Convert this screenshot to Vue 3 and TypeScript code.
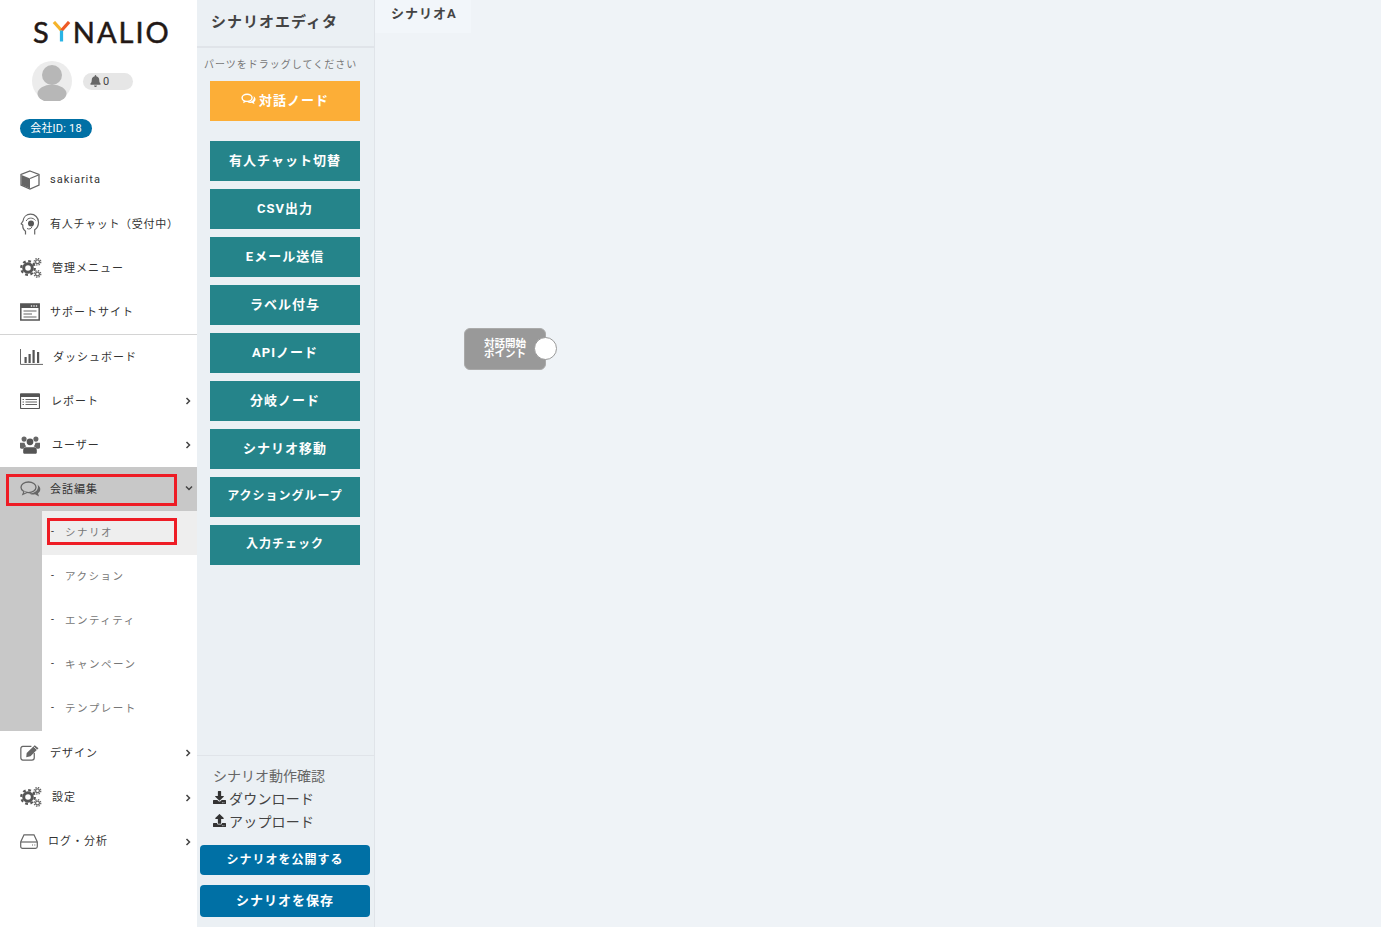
<script setup lang="ts">
interface NavItem {
  icon: string
  label: string
  shift: number
  arrow?: string
  divider?: boolean
  active?: boolean
  narrow?: boolean
}
const topNav: NavItem[] = [
  { icon: 'cube', label: 'sakiarita', shift: 0 },
  { icon: 'head', label: '有人チャット（受付中）', shift: 0, narrow: true },
  { icon: 'gears', label: '管理メニュー', shift: 2 },
  { icon: 'browser', label: 'サポートサイト', shift: 0, divider: true },
  { icon: 'chart', label: 'ダッシュボード', shift: 3 },
  { icon: 'list', label: 'レポート', shift: 1, arrow: 'right' },
  { icon: 'users', label: 'ユーザー', shift: 2, arrow: 'right' },
  { icon: 'comments', label: '会話編集', shift: 0, arrow: 'down', active: true },
]
const subNav = ['シナリオ', 'アクション', 'エンティティ', 'キャンペーン', 'テンプレート']
const bottomNav: NavItem[] = [
  { icon: 'edit', label: 'デザイン', shift: 0, arrow: 'right' },
  { icon: 'gears', label: '設定', shift: 2, arrow: 'right' },
  { icon: 'hdd', label: 'ログ・分析', shift: -2, arrow: 'right' },
]
const parts = ['有人チャット切替', 'CSV出力', 'Eメール送信', 'ラベル付与', 'APIノード', '分岐ノード', 'シナリオ移動', 'アクショングループ', '入力チェック']
const tightParts = ['アクショングループ', '入力チェック']
</script>

<template>
  <div class="page">
    <svg class="defs" width="0" height="0" aria-hidden="true">
      <symbol id="cube" viewBox="0 0 20 20">
        <path d="M10 1 19 4.500V15L10 19 1 15V4.500Z" fill="none" stroke="#666" stroke-width="1.300" />
        <path d="M1.500 5 10 8.500V18.500L1.500 15Z" fill="#666" />
        <path d="M10 8.500 18.500 5" stroke="#666" stroke-width="1.300" />
      </symbol>
      <symbol id="head" viewBox="0 0 20 22">
        <path d="M5.500 21.500V18.300C3.300 16.500 2.500 14.300 2.800 12L1.200 10.800 3 8C3.500 4 6.500 1.200 10.500 1.200c4.500 0 8 3.500 8 8 0 3.500-1.500 6-3.800 7.500v4.800" fill="none" stroke="#666" stroke-width="1.200" />
        <circle cx="11" cy="10.500" r="3" fill="#555" />
        <path d="M6.200 8C7.500 4.500 13 4 15.500 7.500M7 15.500c2 1 4.500.5 5-2" fill="none" stroke="#666" stroke-width="1" />
      </symbol>
      <symbol id="gears" viewBox="0 0 22 20">
        <circle cx="8" cy="10" r="4.300" fill="none" stroke="#555" stroke-width="3" />
        <circle cx="8" cy="10" r="6.800" fill="none" stroke="#555" stroke-width="2.200" stroke-dasharray="2.800 2.540" />
        <circle cx="17.500" cy="3.800" r="1.900" fill="none" stroke="#666" stroke-width="1.200" />
        <circle cx="17.500" cy="3.800" r="3.300" fill="none" stroke="#666" stroke-width="1.300" stroke-dasharray="1.400 1.190" />
        <circle cx="17.500" cy="16" r="1.900" fill="none" stroke="#666" stroke-width="1.200" />
        <circle cx="17.500" cy="16" r="3.300" fill="none" stroke="#666" stroke-width="1.300" stroke-dasharray="1.400 1.190" />
      </symbol>
      <symbol id="browser" viewBox="0 0 20 18">
        <path d="M.8 1H19.200V17H.8Z" fill="none" stroke="#555" stroke-width="1.500" />
        <path d="M1 1H19V5H1Z" fill="#555" />
        <circle cx="11.500" cy="3" r=".8" fill="#fff" /><circle cx="14" cy="3" r=".8" fill="#fff" /><circle cx="16.500" cy="3" r=".8" fill="#fff" />
        <path d="M3.500 8H16.500M3.500 11H12M3.500 14H16.500" stroke="#666" stroke-width="1.100" />
      </symbol>
      <symbol id="chart" viewBox="0 0 23 16">
        <path d="M.5 0V15.400H23" fill="none" stroke="#666" stroke-width="1" />
        <path d="M4.500 8h2.200v6H4.500ZM8.500 5h2.200v9H8.500ZM12.500 1h2.200v13h-2.200ZM17 3h2.200v11H17Z" fill="#555" />
      </symbol>
      <symbol id="list" viewBox="0 0 20 16">
        <path d="M1 .8H19A.8.8 0 0 1 19.500 1.500V15A.8.8 0 0 1 19 15.500H1A.8.8 0 0 1 .5 15V1.500A.8.8 0 0 1 1 .8Z" fill="none" stroke="#555" stroke-width="1.200" />
        <path d="M.5 1H19.500V4H.5Z" fill="#555" />
        <path d="M2.500 6.500H4M2.500 9H4M2.500 11.500H4M5.500 6.500H17M5.500 9H17M5.500 11.500H17" stroke="#666" stroke-width="1.100" />
      </symbol>
      <symbol id="users" viewBox="0 0 22 20">
        <circle cx="4.500" cy="3.500" r="2.800" fill="#666" />
        <circle cx="17.500" cy="3.500" r="2.800" fill="#666" />
        <circle cx="11" cy="6.500" r="3.700" fill="#555" />
        <path d="M0 7.500h5C5.500 9.500 6 10.500 7 11.500 5.500 12 4.500 13 4 14H1.500C.5 14 0 13.500 0 12.500ZM22 7.500h-5c-.5 2-1 3-2 4 1.500.5 2.500 1.500 3 2.500h2.500c1 0 1.500-.5 1.500-1.500Z" fill="#666" />
        <path d="M6 12.500h10c1.500 0 2.500 1.500 2.500 3.500v2c0 1-.5 1.700-1.500 1.700H5c-1 0-1.500-.7-1.500-1.700v-2c0-2 1-3.500 2.500-3.500Z" fill="#555" />
      </symbol>
      <symbol id="comments" viewBox="0 0 21 16">
        <ellipse cx="8.500" cy="6.300" rx="7.500" ry="5.300" fill="none" stroke="#666" stroke-width="1.300" />
        <path d="M4 10.300 2.800 13.500 7 11.500" fill="#c8c8c8" stroke="#666" stroke-width="1.100" />
        <path d="M17 3.500C19.500 5 21 7 20 10c-.5 1-1.200 1.800-2 2.300l1 3.200-4-2.300c-2 .5-4.500.3-6-1 4 .3 8.500-1.500 9-6 .1-1 0-2-1-2.700Z" fill="#666" />
      </symbol>
      <symbol id="edit" viewBox="0 0 21 18">
        <path d="M15 9.500V14.500A2.500 2.500 0 0 1 12.500 17H3A2.500 2.500 0 0 1 .8 14.500V5A2.500 2.500 0 0 1 3 2.500H12" fill="none" stroke="#666" stroke-width="1.300" />
        <path d="M7 9.500 15.500 1.200 19.500 4.500 11 13 6.500 14Z" fill="#666" />
        <path d="M14.500 3 18 6.200" stroke="#fff" stroke-width=".8" />
      </symbol>
      <symbol id="hdd" viewBox="0 0 18 15">
        <path d="M4 .8H14L17.300 8V12.500A1.800 1.800 0 0 1 15.500 14.300H2.500A1.800 1.800 0 0 1 .7 12.500V8Z" fill="none" stroke="#666" stroke-width="1.200" />
        <path d="M1 8H17" stroke="#666" stroke-width="1.200" />
        <path d="M12 11h1M14.300 11h1" stroke="#666" stroke-width="1.200" />
      </symbol>
      <symbol id="bell" viewBox="0 0 448 512">
        <path d="M224 512c35.32 0 63.97-28.65 63.97-64H160.03c0 35.35 28.65 64 63.97 64zm215.39-149.71c-19.32-20.76-55.47-51.99-55.47-154.29 0-77.7-54.48-139.9-127.94-155.16V32c0-17.67-14.32-32-31.98-32s-31.98 14.33-31.98 32v20.84C118.56 68.1 64.08 130.3 64.08 208c0 102.3-36.15 133.53-55.47 154.29-6 6.45-8.66 14.16-8.61 21.71.11 16.4 12.98 32 32.1 32h383.8c19.12 0 32-15.6 32.1-32 .05-7.55-2.61-15.27-8.61-21.71z" />
      </symbol>
      <symbol id="download" viewBox="0 0 512 512">
        <path d="M216 0h80c13.3 0 24 10.7 24 24v168h87.7c17.8 0 26.7 21.5 14.1 34.1L269.7 378.3c-7.5 7.5-19.8 7.5-27.3 0L90.1 226.1c-12.6-12.6-3.7-34.1 14.1-34.1H192V24c0-13.3 10.7-24 24-24zm296 376v112c0 13.3-10.7 24-24 24H24c-13.3 0-24-10.7-24-24V376c0-13.3 10.7-24 24-24h146.7l49 49c20.1 20.1 52.5 20.1 72.6 0l49-49H488c13.3 0 24 10.7 24 24zm-124 88c0-11-9-20-20-20s-20 9-20 20 9 20 20 20 20-9 20-20zm64 0c0-11-9-20-20-20s-20 9-20 20 9 20 20 20 20-9 20-20z" />
      </symbol>
      <symbol id="upload" viewBox="0 0 512 512">
        <path d="M296 384h-80c-13.3 0-24-10.7-24-24V192h-87.7c-17.8 0-26.7-21.5-14.1-34.1L242.3 5.7c7.5-7.5 19.8-7.5 27.3 0l152.2 152.2c12.6 12.6 3.7 34.1-14.1 34.1H320v168c0 13.3-10.7 24-24 24zm216-8v112c0 13.3-10.7 24-24 24H24c-13.3 0-24-10.7-24-24V376c0-13.3 10.7-24 24-24h136v8c0 30.9 25.1 56 56 56h80c30.9 0 56-25.1 56-56v-8h136c13.3 0 24 10.7 24 24zm-124 88c0-11-9-20-20-20s-20 9-20 20 9 20 20 20 20-9 20-20zm64 0c0-11-9-20-20-20s-20 9-20 20 9 20 20 20 20-9 20-20z" />
      </symbol>
    </svg>

    <aside class="sidebar">
      <div class="logo">
        <span>S</span>
        <svg class="logo-y" viewBox="0 0 20 22" aria-hidden="true">
          <path d="M2 1 10 10" stroke="#f5b32b" stroke-width="3.400" fill="none" />
          <path d="M18 1 10 10" stroke="#ee5a26" stroke-width="3.400" fill="none" />
          <path d="M10 10V21.500" stroke="#28b4e6" stroke-width="3.400" fill="none" />
        </svg>
        <span>NALIO</span>
      </div>
      <div class="profile">
        <svg class="avatar" viewBox="0 0 40 40" aria-hidden="true">
          <circle cx="20" cy="20" r="20" fill="#ececec" />
          <circle cx="20" cy="14" r="10" fill="#b7b7b7" />
          <ellipse cx="20" cy="32.500" rx="14.500" ry="9" fill="#b7b7b7" />
        </svg>
        <span class="bell-pill">
          <svg class="bell" aria-hidden="true"><use href="#bell" /></svg><span class="bell-count">0</span>
        </span>
      </div>
      <div class="company"><span>会社ID: 18</span></div>

      <nav class="nav">
        <div v-for="item in topNav" :key="item.label" class="row" :class="{ divider: item.divider, active: item.active }">
          <svg class="nav-icon" :class="'i-' + item.icon" aria-hidden="true"><use :href="'#' + item.icon" /></svg>
          <span class="label" :class="{ narrow: item.narrow }" :style="{ marginLeft: item.shift + 'px' }">{{ item.label }}</span>
          <svg v-if="item.arrow" class="arrow" :class="{ down: item.arrow === 'down' }" viewBox="0 0 8 8" aria-hidden="true">
            <path d="M2.500 1 5.500 4 2.500 7" fill="none" stroke="#444" stroke-width="1.500" />
          </svg>
        </div>
        <div class="sub">
          <div v-for="(s, i) in subNav" :key="s" class="sub-row" :class="{ current: i === 0 }">
            <span class="dash">-</span><span class="sub-label">{{ s }}</span>
          </div>
        </div>
        <div v-for="(item, i) in bottomNav" :key="item.label" class="row lifted" :class="{ tall: i === 0 }">
          <svg class="nav-icon" :class="'i-' + item.icon" aria-hidden="true"><use :href="'#' + item.icon" /></svg>
          <span class="label" :style="{ marginLeft: item.shift + 'px' }">{{ item.label }}</span>
          <svg class="arrow" viewBox="0 0 8 8" aria-hidden="true">
            <path d="M2.500 1 5.500 4 2.500 7" fill="none" stroke="#444" stroke-width="1.500" />
          </svg>
        </div>
      </nav>
      <div class="mark mark-a"></div>
      <div class="mark mark-b"></div>
    </aside>

    <section class="editor">
      <h1 class="editor-title">シナリオエディタ</h1>
      <p class="hint">パーツをドラッグしてください</p>
      <div class="parts">
        <div class="part orange">
          <svg class="part-icon" viewBox="0 0 21 16" aria-hidden="true">
            <ellipse cx="8.500" cy="6.300" rx="7" ry="5" fill="none" stroke="#fff" stroke-width="2" />
            <path d="M4 10 3 14 8 11.500" fill="#fff" />
            <path d="M17 3.500C19.500 5 21 7 20 10c-.5 1-1.200 1.800-2 2.300l1 3.200-4-2.300c-2 .5-4.500.3-6-1 4 .3 8.500-1.500 9-6 .1-1 0-2-1-2.700Z" fill="#fff" />
          </svg>対話ノード
        </div>
        <div class="teal-list">
          <div v-for="p in parts" :key="p" class="part teal" :class="{ tight: tightParts.includes(p) }">{{ p }}</div>
        </div>
      </div>
      <div class="tools">
        <div class="tool muted">シナリオ動作確認</div>
        <div class="tool"><svg class="tool-icon" aria-hidden="true"><use href="#download" /></svg>ダウンロード</div>
        <div class="tool"><svg class="tool-icon" aria-hidden="true"><use href="#upload" /></svg>アップロード</div>
        <button class="action publish">シナリオを公開する</button>
        <button class="action save">シナリオを保存</button>
      </div>
    </section>

    <main class="canvas">
      <div class="tab">シナリオA</div>
      <div class="node">
        <span class="node-text">対話開始<br />ポイント</span>
        <span class="port"></span>
      </div>
    </main>
  </div>
</template>

<style>
html, body { margin: 0; padding: 0; background: #eff3f7; }
</style>

<style scoped>
.page {
  display: flex;
  width: 1381px;
  height: 927px;
  overflow: hidden;
  font-family: "Roboto", "Noto Sans CJK JP", "Noto Sans", sans-serif;
  color: #333;
  background: #eff3f7;
}
.defs { position: absolute; }

.sidebar { position: relative; width: 197px; flex: none; background: #fff; }
.logo {
  height: 61px;
  box-sizing: border-box;
  padding: 13px 0 0 33px;
  display: flex;
  align-items: flex-start;
  font-family: "Lato", sans-serif;
  font-size: 29px;
  line-height: 38px;
  letter-spacing: 2px;
  color: #231815;
  -webkit-text-stroke: 0.5px #231815;
}
.logo-y { width: 19px; height: 21px; margin: 8px 2px 0 1px; flex: none; }
.profile { display: flex; align-items: center; height: 40px; padding-left: 32px; }
.avatar { width: 40px; height: 40px; }
.bell-pill {
  display: flex;
  align-items: center;
  width: 50px;
  height: 17px;
  margin-left: 11px;
  box-sizing: border-box;
  padding-left: 7px;
  border-radius: 9px;
  background: #e6e6e6;
}
.bell-count { font-size: 11px; line-height: 17px; color: #444; }
.bell { width: 11px; height: 12px; margin-right: 2px; fill: #666; }
.company { height: 19px; margin-top: 18px; padding-left: 20px; display: flex; }
.company span {
  display: block;
  width: 72px;
  height: 19px;
  border-radius: 10px;
  background: #0070a5;
  color: #fff;
  font-size: 11px;
  line-height: 20px;
  letter-spacing: 0.2px;
  text-align: center;
}
.nav { margin-top: 20px; }
.row {
  position: relative;
  display: flex;
  align-items: center;
  height: 44px;
  padding-left: 20px;
  box-sizing: border-box;
}
.row.lifted { padding-bottom: 2px; }
.row.tall { height: 45px; }
.row.divider { height: 45px; border-bottom: 1px solid #d4d4d4; }
.row.active { background: #c8c8c8; }
.nav-icon { width: 20px; height: 20px; margin-right: 10px; flex: none; }
.i-head { height: 22px; }
.i-chart { width: 23px; height: 16px; margin-right: 7px; }
.i-gears { width: 22px; height: 20px; margin-right: 8px; }
.i-hdd { width: 18px; height: 15px; margin-right: 12px; }
.i-list { width: 20px; height: 16px; }
.i-browser { width: 20px; height: 18px; }
.i-edit { width: 20px; height: 17px; }
.i-comments { width: 21px; height: 16px; margin-right: 9px; }
.label { padding-bottom: 2px; font-size: 11px; letter-spacing: 1px; color: #333; white-space: nowrap; }
.label.narrow { letter-spacing: 0.7px; }
.arrow { position: absolute; left: 184px; top: 18px; width: 8px; height: 8px; }
.arrow.down { transform: rotate(90deg); left: 185px; top: 17px; }
.sub { background: #c8c8c8; padding-left: 42px; }
.sub-row {
  display: flex;
  align-items: center;
  height: 44px;
  background: #fff;
  padding: 0 0 4px 9px;
  box-sizing: border-box;
  font-size: 10.500px;
}
.sub-row.current { background: #eeeeee; }
.dash { width: 14px; color: #333; }
.sub-label { letter-spacing: 1.5px; color: #777; white-space: nowrap; }
.mark { position: absolute; box-sizing: border-box; border: 3px solid #ee1c25; }
.mark-a { left: 6px; top: 474px; width: 171px; height: 32px; }
.mark-b { left: 47px; top: 518px; width: 130px; height: 27px; }

.editor {
  width: 178px;
  flex: none;
  display: flex;
  flex-direction: column;
  background: #ebf0f4;
  border-right: 1px solid #e0e4e9;
  box-sizing: border-box;
}
.editor-title {
  margin: 0;
  height: 48px;
  box-sizing: border-box;
  padding: 10px 0 0 14px;
  border-bottom: 2px solid #e0e4e9;
  font-size: 15px;
  font-weight: 700;
  line-height: 24px;
  letter-spacing: 1px;
  color: #444;
}
.hint {
  margin: 9px 0 0 7px;
  font-size: 10px;
  line-height: 15px;
  letter-spacing: 1px;
  color: #777;
  white-space: nowrap;
}
.parts { margin-top: 9px; padding-left: 13px; }
.part {
  width: 150px;
  height: 40px;
  box-sizing: border-box;
  padding-bottom: 4px;
  display: flex;
  align-items: center;
  justify-content: center;
  color: #fff;
  font-size: 13px;
  font-weight: 700;
  letter-spacing: 1px;
}
.orange { background: #fcae37; }
.part-icon { width: 15px; height: 12px; margin-right: 3px; }
.teal-list { display: flex; flex-direction: column; gap: 8px; margin-top: 20px; }
.teal { background: #25848a; }
.tight { font-size: 12px; padding-bottom: 6px; }
.tools {
  margin-top: auto;
  height: 172px;
  box-sizing: border-box;
  border-top: 1px solid #e0e4e9;
  padding: 7px 0 0 3px;
}
.tool {
  height: 23px;
  padding-left: 13px;
  display: flex;
  align-items: center;
  font-size: 14px;
  letter-spacing: 0.2px;
  color: #444;
}
.tool.muted { letter-spacing: 0; color: #666; }
.tool-icon { width: 13px; height: 13px; margin-right: 3px; fill: #333; }
.action {
  display: block;
  width: 170px;
  border: 0;
  border-radius: 4px;
  background: #0070a5;
  color: #fff;
  font-family: inherit;
  font-weight: 700;
  letter-spacing: 1px;
  padding: 0 0 4px;
}
.publish { height: 30px; margin-top: 13px; font-size: 12px; }
.save { height: 32px; margin-top: 10px; font-size: 13px; }

.canvas { position: relative; flex: 1; }
.tab {
  width: 96px;
  height: 33px;
  box-sizing: border-box;
  padding: 3px 0 0 16px;
  background: #f2f6fa;
  font-size: 13px;
  font-weight: 700;
  line-height: 22px;
  letter-spacing: 1px;
  color: #444;
}
.node {
  position: absolute;
  left: 89px;
  top: 328px;
  width: 82px;
  height: 42px;
  border-radius: 6px;
  border: 1px solid #aaa;
  background: #999;
  display: flex;
  align-items: center;
  box-sizing: border-box;
  padding-left: 19px;
}
.node-text {
  font-size: 10.500px;
  line-height: 10.500px;
  font-weight: 700;
  color: #fff;
  white-space: nowrap;
}
.port {
  position: absolute;
  left: 69px;
  top: 8px;
  width: 23px;
  height: 23px;
  box-sizing: border-box;
  border-radius: 50%;
  border: 1px solid #999;
  background: #fff;
}
</style>
